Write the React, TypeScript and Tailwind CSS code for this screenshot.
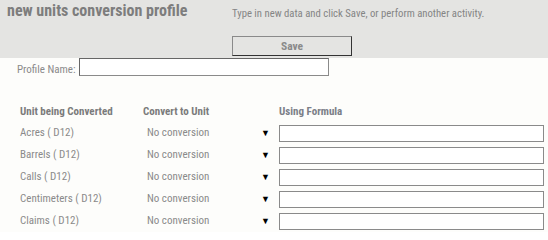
import React from "react";

const rows = ["Acres ( D12)", "Barrels ( D12)", "Calls ( D12)", "Centimeters ( D12)", "Claims ( D12)"];

export default function App() {
  return (
    <div className="w-[548px] h-[232px] bg-[#fdfdfb] overflow-hidden text-[#8a8a8a]" style={{ fontFamily: "Roboto, 'Liberation Sans', sans-serif", fontStretch: "condensed" }}>
      <div className="h-[58px] bg-[#e4e4e2] flex">
        <div className="w-[232px] pl-[7px] pt-[1px] text-[16px] font-bold text-[#7d7d7d] leading-[20px]">new units conversion profile</div>
        <div className="flex flex-col">
          <div className="text-[10.7px] leading-[14px] pt-[7px] text-[#858585]">Type in new data and click Save, or perform another activity.</div>
          <button className="mt-[15px] w-[120px] h-[20px] border border-t-[#8a8a8a] border-l-[#8a8a8a] border-r-[#333] border-b-[#333] bg-[#e4e4e2] text-[11.5px] font-bold text-[#8a8a8a] leading-[16px]">Save</button>
        </div>
      </div>
      <div className="flex items-end pl-[17px] h-[18px]">
        <span className="text-[11px] leading-[13px] mr-[3px]">Profile Name:</span>
        <div className="w-[250px] h-[18px] border border-[#8a8a8a] border-t-[#666] border-l-[#666] bg-white" />
      </div>
      <div className="mt-[28px] pl-[20px] grid grid-cols-[123px_136px_1fr] text-[11px]">
        <div className="font-bold text-[#7b7b7b] leading-[16px]">Unit being Converted</div>
        <div className="font-bold text-[#7b7b7b] leading-[16px]">Convert to Unit</div>
        <div className="font-bold text-[#7b7f88] leading-[16px]">Using Formula</div>
      </div>
      <div className="mt-[5px] pl-[20px] flex flex-col gap-[5px]">
        {rows.map((r) => (
          <div key={r} className="flex items-center h-[17px] text-[11px]">
            <div className="w-[123px]">{r}</div>
            <div className="w-[118px] pl-[4px]">No conversion</div>
            <div className="w-[18px] text-black text-[9px] leading-[9px]">▼</div>
            <div className="w-[265px] h-[17px] border border-[#8a8a8a] bg-white" />
          </div>
        ))}
      </div>
    </div>
  );
}
